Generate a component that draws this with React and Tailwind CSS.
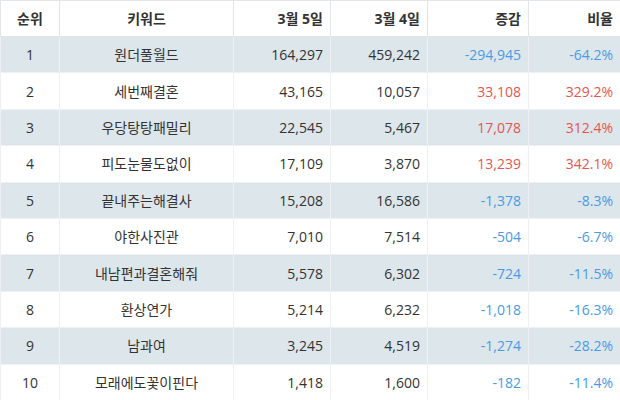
import React from 'react';

const rows = [
  [1, '원더풀월드', '164,297', '459,242', '-294,945', '-64.2%'],
  [2, '세번째결혼', '43,165', '10,057', '33,108', '329.2%'],
  [3, '우당탕탕패밀리', '22,545', '5,467', '17,078', '312.4%'],
  [4, '피도눈물도없이', '17,109', '3,870', '13,239', '342.1%'],
  [5, '끝내주는해결사', '15,208', '16,586', '-1,378', '-8.3%'],
  [6, '야한사진관', '7,010', '7,514', '-504', '-6.7%'],
  [7, '내남편과결혼해줘', '5,578', '6,302', '-724', '-11.5%'],
  [8, '환상연가', '5,214', '6,232', '-1,018', '-16.3%'],
  [9, '남과여', '3,245', '4,519', '-1,274', '-28.2%'],
  [10, '모래에도꽃이핀다', '1,418', '1,600', '-182', '-11.4%'],
];

const App = () => {
  return (
    <div className="w-[620px] h-[400px] bg-white font-['Open_Sans','Noto_Sans_CJK_KR',sans-serif] text-[14px] text-[#333]">
      <table className="w-[620px] h-[400px] table-fixed border-collapse border border-[#e3e6e8]">
        <colgroup>
          <col className="w-[59px]" />
          <col className="w-[174px]" />
          <col className="w-[97px]" />
          <col className="w-[97px]" />
          <col className="w-[101px]" />
          <col className="w-[92px]" />
        </colgroup>
        <thead>
          <tr className="h-[36px]">
            <th className="border border-[#e3e6e8] text-center font-bold">순위</th>
            <th className="border border-[#e3e6e8] text-center font-bold">키워드</th>
            <th className="border border-[#e3e6e8] text-right pr-[7px] font-bold">3월 5일</th>
            <th className="border border-[#e3e6e8] text-right pr-[7px] font-bold">3월 4일</th>
            <th className="border border-[#e3e6e8] text-right pr-[7px] font-bold">증감</th>
            <th className="border border-[#e3e6e8] text-right pr-[7px] font-bold">비율</th>
          </tr>
        </thead>
        <tbody>
          {rows.map((r, i) => {
            const up = !r[4].startsWith('-');
            const color = up ? 'text-[#e8554e]' : 'text-[#4a9ae6]';
            return (
              <tr key={r[0]} className={`h-[36.4px] ${i % 2 === 0 ? 'bg-[#dde6eb]' : 'bg-white'}`}>
                <td className="border border-[#eef1f3] text-center">{r[0]}</td>
                <td className="border border-[#eef1f3] text-center">{r[1]}</td>
                <td className="border border-[#eef1f3] text-right pr-[7px]">{r[2]}</td>
                <td className="border border-[#eef1f3] text-right pr-[7px]">{r[3]}</td>
                <td className={`border border-[#eef1f3] text-right pr-[7px] ${color}`}>{r[4]}</td>
                <td className={`border border-[#eef1f3] text-right pr-[7px] ${color}`}>{r[5]}</td>
              </tr>
            );
          })}
        </tbody>
      </table>
    </div>
  );
};

export default App;
